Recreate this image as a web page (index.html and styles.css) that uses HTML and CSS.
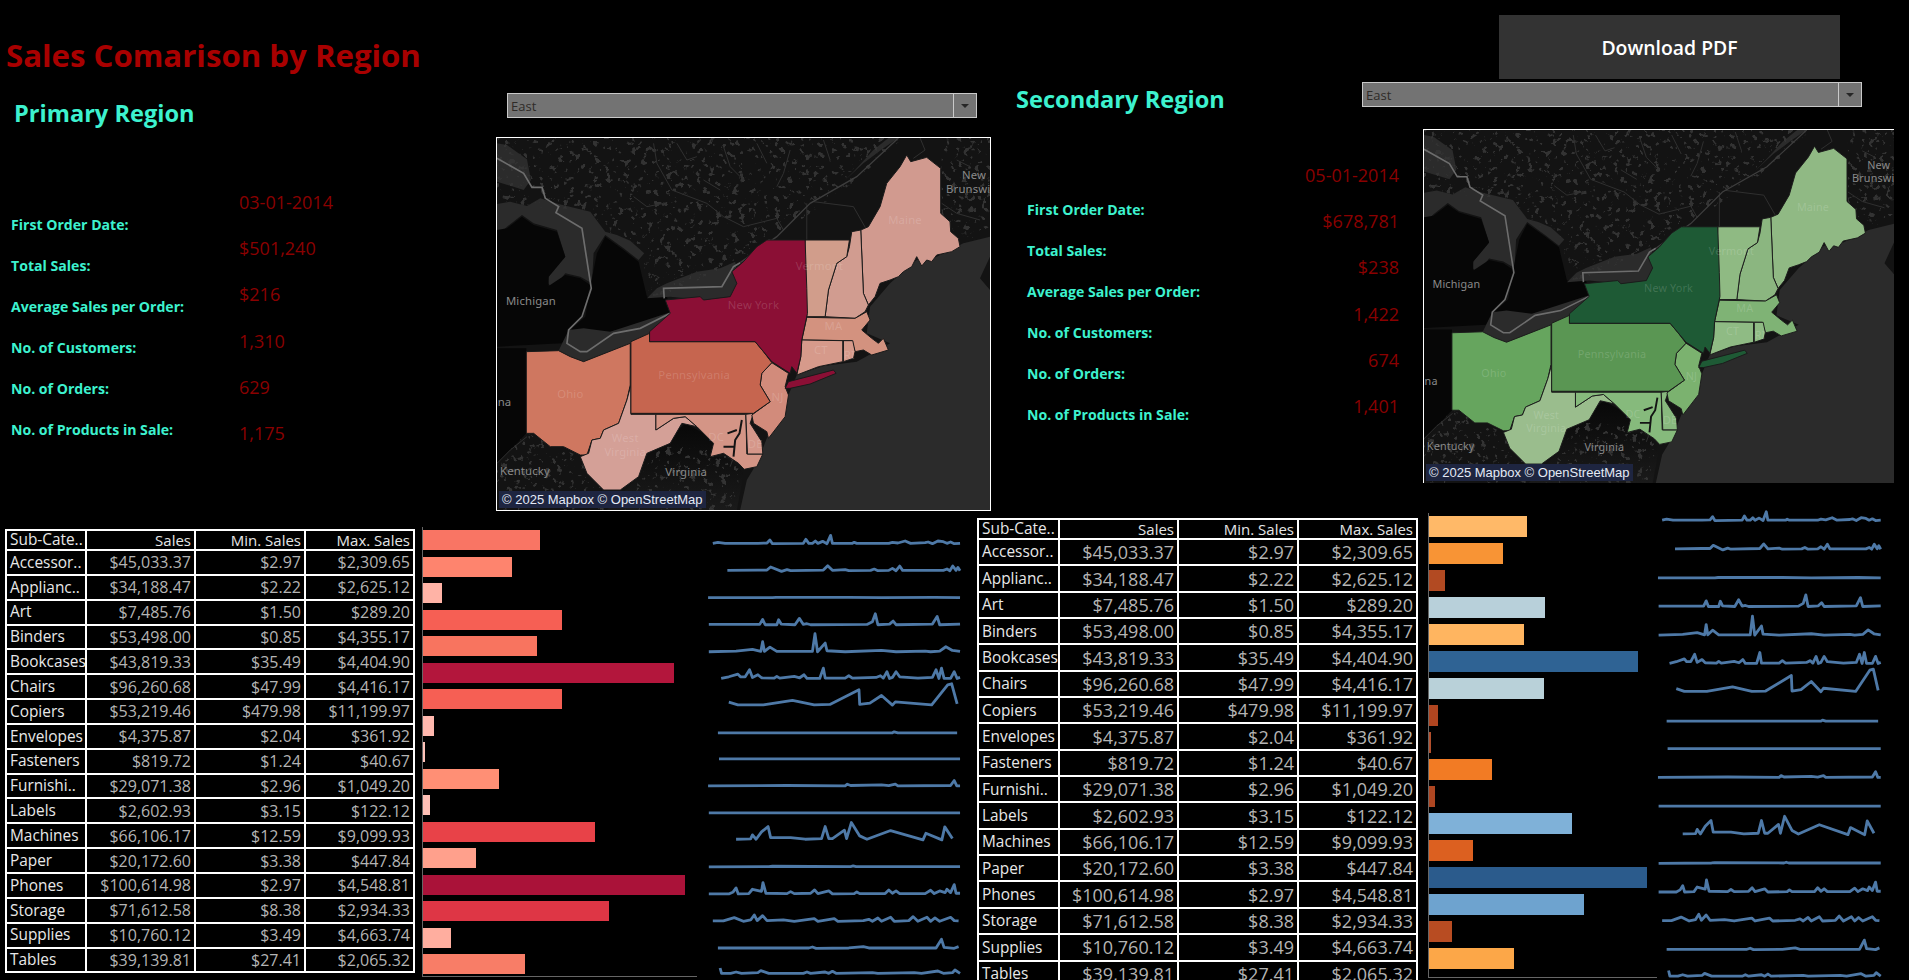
FILE: index.html
```html
<!DOCTYPE html>
<html lang="en">
<head>
<meta charset="utf-8">
<title>Sales Comparison by Region</title>
<link rel="stylesheet" href="styles.css">
</head>
<body>
<main class="dash">
  <section class="top">
    <div class="block block-a">
      <div class="head head-a">
        <div class="heading-a">
          <h1 class="title">Sales Comarison by Region</h1>
          <h2 class="region region-a">Primary Region</h2>
        </div>
        <div class="control-a">
          <div class="select select-a"><span class="select-text">East</span><span class="select-btn"><i class="caret"></i></span></div>
        </div>
      </div>
      <div class="body-row">
        <div class="stats stats-a">
          <div class="labels labels-a">
            <div>First Order Date:</div><div>Total Sales:</div><div>Average Sales per Order:</div><div>No. of Customers:</div><div>No. of Orders:</div><div>No. of Products in Sale:</div>
          </div>
          <div class="values values-a">
            <div>03-01-2014</div><div>$501,240</div><div>$216</div><div>1,310</div><div>629</div><div>1,175</div>
          </div>
        </div>
        <div class="map map-a">
          <svg class="map-svg" viewBox="20 174 1480 1116" preserveAspectRatio="none">
            <defs>
              <filter id="speck" x="0" y="0" width="100%" height="100%" color-interpolation-filters="sRGB">
                <feTurbulence type="fractalNoise" baseFrequency="0.055" numOctaves="3" seed="7"/>
                <feColorMatrix values="0 0 0 0 0.2 0 0 0 0 0.2 0 0 0 0 0.2 14 0 0 0 -8.6"/>
              </filter>
              <clipPath id="north"><path d="M20 174H1240L1100 300 860 470 740 545 540 640 470 650 460 530 340 450 300 390 130 380 20 360Z M1355 174H1500V480L1410 480 1355 400Z M20 1150 108 1060 270 1130 340 1235 340 1290H20Z M500 1100 750 1100 740 1290H400Z"/></clipPath>
              <linearGradient id="vaShade" x1="0" y1="0" x2="0" y2="1"><stop offset="0" stop-color="#080808"/><stop offset="1" stop-color="#1a1a1a"/></linearGradient>
            </defs>
            <g id="map-art">
              <rect class="land" x="20" y="174" width="1480" height="1116"/>
              <path class="water" d="M20 190 50 195 110 238 122 300 100 330 20 305Z"/>
              <path class="water" d="M1060 305 1120 250 1180 205 1225 174H1195L1150 210 1090 275Z"/>
              <path class="water" d="M20 372 60 365 110 378 150 355 205 372 300 395 345 455 380 465 420 482 462 520 445 540 400 505 345 465 310 520 305 610 270 590 225 580 190 625 172 610 175 590 225 530 200 450 130 430 95 405 50 440 20 470Z"/>
              <path class="black" d="M20 450 50 445 95 410 130 435 200 455 225 530 175 590 175 618 225 585 270 595 300 615 280 700 240 750 215 790 20 800Z"/>
              <path class="black" d="M300 620 320 520 345 470 400 510 445 545 470 650 530 650 545 700 440 735 360 755 280 800 240 790 245 745 285 710Z"/>
              <path class="water" d="M470 655 500 625 530 610 620 575 690 565 735 545 745 600 720 650 640 660 540 650Z"/>
              <path class="water" d="M205 812 235 750 280 745 360 755 545 695 480 760 420 790 280 845 240 830Z"/>
              <path class="black" d="M20 805H108V1060L70 1100 20 1150Z"/>
              <path class="water" d="M1500 470 1420 490 1340 530 1280 540 1200 610 1140 680 1130 760 1200 790 1100 845 1000 858 920 885 895 945 830 1075 800 1150 770 1200 750 1290H1500V630L1470 595 1500 530Z"/>
              <path d="M520 1090 585 1030 640 1060 670 1090 660 1130 700 1130 745 1160 760 1180 740 1290H350L445 1190 470 1125Z" fill="url(#vaShade)"/>
              <rect x="20" y="174" width="1480" height="1116" filter="url(#speck)" clip-path="url(#north)"/>
              <path class="river" d="M490 190 500 250 545 330 650 370 700 410 760 440 860 415 880 450M950 370 950 480M970 365 1090 380 1130 450M1355 370 1400 400 1470 420M20 1150 60 1110 110 1070M720 1160 745 1090 730 1030M1290 174 1305 210 1270 235M560 190 590 240 620 230M700 200 720 260 760 300M800 190 830 250M900 210 880 280 860 320M640 300 690 330M1000 180 1020 240M430 350 470 380 520 370M1400 240 1440 260"/>
              <path class="border" d="M20 235 100 280 125 322 155 322 165 355 205 380 197 398 275 445 303 625 275 710 235 750 230 790 270 815 290 815 370 760 450 745 540 700"/>
              <path class="border" d="M522 655 520 625 695 620 730 560 750 548"/>
              <path class="border thin" d="M750 548 860 470 960 370 1100 290 1225 174"/>
              <g class="states">
                <path class="st me" d="M1112 450 1135 440 1170 380 1190 310 1230 260 1250 225 1262 245 1310 232 1352 265 1352 400 1380 425 1382 455 1405 475 1410 500 1385 515 1340 525 1325 545 1310 540 1295 558 1280 530 1265 560 1240 575 1225 590 1200 600 1170 610 1155 650 1135 675 1120 640Z"/>
                <path class="st nh" d="M1085 455 1112 450 1120 640 1135 675 1125 695 1095 715 1005 710 1015 630 1040 550 1070 530 1078 500Z"/>
                <path class="st vt" d="M945 480H1078L1070 530 1040 550 1015 630 1005 710 950 710 945 625 940 620Z"/>
                <path class="st ma" d="M950 712 1095 715 1130 695 1140 720 1115 750 1145 775 1165 790 1180 775 1195 810 1145 825 1120 810 1095 815 1085 782 935 780Z"/>
                <path class="st ct" d="M935 780 1058 782V845L985 860 920 885 932 830Z"/>
                <path class="st ct" d="M1060 782H1088L1095 815 1090 835 1060 845Z"/>
                <path class="st oh" d="M108 815 205 812 240 830 280 845 420 790V915L410 960 385 1030 340 1050 330 1075 305 1080 290 1125 270 1125 220 1100 180 1100 130 1060 108 1060Z"/>
                <path class="st wv" d="M422 915V1003H497V1050L550 1015 585 1010 620 1040 575 1030 540 1090 470 1120 445 1190 390 1230 340 1230 290 1180 270 1130 295 1120 305 1080 330 1075 340 1050 385 1030 410 960Z"/>
                <path class="st md" d="M497 1003H767L770 1122H818L800 1160 762 1168 745 1150 700 1120 660 1130 670 1090 620 1040 585 1010 550 1015 497 1050Z"/>
                <path class="st de" d="M767 1003 790 1000 780 1030 815 1085 818 1122H772Z"/>
                <path class="st nj" d="M845 848 895 880 885 920 895 945 885 1010 835 1075 830 1055 790 1030 785 1005 840 965 810 915 815 880Z"/>
                <path class="st pa" d="M422 785 478 760V785H795L820 815 845 848 815 880 810 915 840 965 790 1000H422Z"/>
                <path class="st ny" d="M830 480H945L950 625 952 700 935 780 932 830 920 880 905 860 900 880 845 845 820 815 795 785H478V755L540 700 525 660 630 650 640 660 720 650 740 610 725 575 760 545 800 500Z"/>
                <path class="st ny" d="M885 925 895 905 1030 870 1038 880 960 912 900 925Z"/>
                <path class="chesapeake" d="M755 1020 748 1060 735 1080 730 1130M740 1050 712 1060M735 1100 700 1100"/>
              </g>
            </g>
            <g class="map-labels">
              <text class="lb-dark" x="122" y="675">Michigan</text>
              <text class="lb-dark" x="104" y="1186">Kentucky</text>
              <text class="lb-dark" x="588" y="1188">Virginia</text>
              <text class="lb-dark" x="1452" y="298">New</text>
              <text class="lb-dark lb-start" x="1368" y="338">Brunswick</text>
              <text class="lb-dark lb-end" x="63" y="979">Indiana</text>
              <text class="lb-state" x="790" y="686">New York</text>
              <text class="lb-state" x="988" y="569">Vermont</text>
              <text class="lb-state" x="1245" y="431">Maine</text>
              <text class="lb-state" x="1030" y="749">MA</text>
              <text class="lb-state" x="992" y="823">CT</text>
              <text class="lb-state" x="1078" y="836">RI</text>
              <text class="lb-state" x="612" y="896">Pennsylvania</text>
              <text class="lb-state" x="240" y="954">Ohio</text>
              <text class="lb-state" x="862" y="963">NJ</text>
              <text class="lb-state" x="405" y="1087">West</text>
              <text class="lb-state" x="405" y="1128">Virginia</text>
              <text class="lb-state" x="678" y="1083">DC</text>
              <text class="lb-state" x="795" y="1104">DE</text>
            </g>
          </svg>
          <div class="attrib">© 2025 Mapbox © OpenStreetMap</div>
        </div>
      </div>
    </div>

    <div class="block block-b">
      <div class="head head-b">
        <h2 class="region region-b">Secondary Region</h2>
        <div class="control-b">
          <button class="pdf" type="button">Download PDF</button>
          <div class="select select-b"><span class="select-text">East</span><span class="select-btn"><i class="caret"></i></span></div>
        </div>
      </div>
      <div class="body-row">
        <div class="stats stats-b">
          <div class="labels labels-b">
            <div>First Order Date:</div><div>Total Sales:</div><div>Average Sales per Order:</div><div>No. of Customers:</div><div>No. of Orders:</div><div>No. of Products in Sale:</div>
          </div>
          <div class="values values-b">
            <div>05-01-2014</div><div>$678,781</div><div>$238</div><div>1,422</div><div>674</div><div>1,401</div>
          </div>
        </div>
        <div class="map map-b">
          <svg class="map-svg" viewBox="20 174 1480 1116" preserveAspectRatio="none">
            <use href="#map-art"/>
            <g class="map-labels">
              <text class="lb-dark" x="122" y="675">Michigan</text>
              <text class="lb-dark" x="104" y="1186">Kentucky</text>
              <text class="lb-dark" x="588" y="1188">Virginia</text>
              <text class="lb-dark" x="1452" y="298">New</text>
              <text class="lb-dark lb-start" x="1368" y="338">Brunswick</text>
              <text class="lb-dark lb-end" x="63" y="979">Indiana</text>
              <text class="lb-state" x="790" y="686">New York</text>
              <text class="lb-state" x="988" y="569">Vermont</text>
              <text class="lb-state" x="1245" y="431">Maine</text>
              <text class="lb-state" x="1030" y="749">MA</text>
              <text class="lb-state" x="992" y="823">CT</text>
              <text class="lb-state" x="1078" y="836">RI</text>
              <text class="lb-state" x="612" y="896">Pennsylvania</text>
              <text class="lb-state" x="240" y="954">Ohio</text>
              <text class="lb-state" x="862" y="963">NJ</text>
              <text class="lb-state" x="405" y="1087">West</text>
              <text class="lb-state" x="405" y="1128">Virginia</text>
              <text class="lb-state" x="678" y="1083">DC</text>
              <text class="lb-state" x="795" y="1104">DE</text>
            </g>
          </svg>
          <div class="attrib">© 2025 Mapbox © OpenStreetMap</div>
        </div>
      </div>
    </div>
  </section>

  <section class="bottom">
    <div class="detail detail-a">
      <table class="sales sales-a">
        <colgroup><col class="c1"><col class="c2"><col class="c3"><col class="c4"></colgroup>
        <thead><tr><th class="name">Sub-Cate..</th><th>Sales</th><th>Min. Sales</th><th>Max. Sales</th></tr></thead>
        <tbody>
          <tr><th class="name">Accessor..</th><td>$45,033.37</td><td>$2.97</td><td>$2,309.65</td></tr>
          <tr><th class="name">Applianc..</th><td>$34,188.47</td><td>$2.22</td><td>$2,625.12</td></tr>
          <tr><th class="name">Art</th><td>$7,485.76</td><td>$1.50</td><td>$289.20</td></tr>
          <tr><th class="name">Binders</th><td>$53,498.00</td><td>$0.85</td><td>$4,355.17</td></tr>
          <tr><th class="name">Bookcases</th><td>$43,819.33</td><td>$35.49</td><td>$4,404.90</td></tr>
          <tr><th class="name">Chairs</th><td>$96,260.68</td><td>$47.99</td><td>$4,416.17</td></tr>
          <tr><th class="name">Copiers</th><td>$53,219.46</td><td>$479.98</td><td>$11,199.97</td></tr>
          <tr><th class="name">Envelopes</th><td>$4,375.87</td><td>$2.04</td><td>$361.92</td></tr>
          <tr><th class="name">Fasteners</th><td>$819.72</td><td>$1.24</td><td>$40.67</td></tr>
          <tr><th class="name">Furnishi..</th><td>$29,071.38</td><td>$2.96</td><td>$1,049.20</td></tr>
          <tr><th class="name">Labels</th><td>$2,602.93</td><td>$3.15</td><td>$122.12</td></tr>
          <tr><th class="name">Machines</th><td>$66,106.17</td><td>$12.59</td><td>$9,099.93</td></tr>
          <tr><th class="name">Paper</th><td>$20,172.60</td><td>$3.38</td><td>$447.84</td></tr>
          <tr><th class="name">Phones</th><td>$100,614.98</td><td>$2.97</td><td>$4,548.81</td></tr>
          <tr><th class="name">Storage</th><td>$71,612.58</td><td>$8.38</td><td>$2,934.33</td></tr>
          <tr><th class="name">Supplies</th><td>$10,760.12</td><td>$3.49</td><td>$4,663.74</td></tr>
          <tr><th class="name">Tables</th><td>$39,139.81</td><td>$27.41</td><td>$2,065.32</td></tr>
        </tbody>
      </table>
      <div class="bars bars-a">
        <div class="bar r1"></div><div class="bar r2"></div><div class="bar r3"></div><div class="bar r4"></div><div class="bar r5"></div><div class="bar r6"></div><div class="bar r7"></div><div class="bar r8"></div><div class="bar r9"></div><div class="bar r10"></div><div class="bar r11"></div><div class="bar r12"></div><div class="bar r13"></div><div class="bar r14"></div><div class="bar r15"></div><div class="bar r16"></div><div class="bar r17"></div>
      </div>
      <svg class="spark spark-a" viewBox="820 60 700 1340" preserveAspectRatio="none">
        <g id="spark-lines">
          <path d="M836 103 850 100 870 103 960 103 985 102 993 93 1000 104 1085 103 1092 91 1100 103 1110 103 1118 96 1125 103 1138 97 1150 104 1160 79 1165 103 1220 103 1225 100 1232 103 1320 103 1330 100 1345 102 1365 96 1380 103 1420 101 1428 99 1440 104 1455 96 1470 98 1480 103 1490 99 1500 104 1516 103"/>
          <path d="M876 184 960 183 985 183 995 174 1025 187 1040 182 1050 185 1140 183 1152 170 1165 184 1200 182 1210 185 1270 184 1280 180 1290 185 1320 184 1330 178 1340 185 1350 171 1358 184 1470 184 1480 180 1488 185 1496 171 1505 184 1510 175 1516 185"/>
          <path d="M823 266 1000 266 1010 265 1210 265 1300 266 1445 265 1516 266"/>
          <path d="M825 346 965 346 973 331 980 347 1012 347 1017 332 1024 345 1062 347 1074 328 1085 346 1095 344 1105 347 1260 346 1275 338 1283 314 1290 347 1322 345 1332 336 1340 347 1440 345 1453 322 1460 347 1516 345"/>
          <path d="M825 428 900 426 945 421 968 427 973 398 978 427 993 414 1012 427 1110 427 1117 374 1124 428 1145 402 1150 425 1200 428 1300 424 1340 428 1420 426 1435 428 1460 426 1477 413 1495 424 1516 427"/>
          <path d="M859 508 880 503 905 495 912 503 925 503 937 482 945 505 960 497 970 506 1005 507 1012 502 1020 507 1060 502 1075 506 1087 497 1095 508 1130 508 1140 477 1145 507 1200 507 1210 500 1220 507 1285 505 1297 500 1305 507 1315 488 1322 508 1330 505 1340 488 1350 503 1400 507 1440 505 1450 482 1458 508 1465 477 1472 508 1490 508 1500 488 1508 508 1516 505"/>
          <path d="M880 579 905 587 975 587 1055 574 1115 587 1158 586 1238 542 1240 586 1268 582 1300 559 1330 588 1338 578 1438 587 1482 527 1493 524 1508 584"/>
          <path d="M850 671 1330 671 1335 668 1345 671 1508 671"/>
          <path d="M853 749H1516"/>
          <path d="M823 830 1040 829 1200 830 1206 825 1215 829 1300 827 1320 829 1338 825 1345 830 1490 829 1500 814 1507 830 1516 830"/>
          <path d="M825 911H1516"/>
          <path d="M900 990 940 989 945 977 955 990 970 968 988 952 995 985 1050 985 1090 990 1135 988 1145 952 1155 988 1165 988 1198 963 1204 988 1217 940 1240 980 1260 990 1325 964 1414 992 1422 972 1466 992 1474 953 1495 988"/>
          <path d="M825 1073 990 1072 1000 1071 1215 1072 1222 1070 1230 1072 1516 1072"/>
          <path d="M825 1154 880 1154 892 1148 900 1136 906 1154 935 1153 945 1140 970 1146 974 1120 982 1152 1040 1153 1050 1147 1060 1153 1105 1152 1116 1142 1125 1153 1155 1145 1165 1154 1225 1153 1232 1148 1240 1153 1310 1153 1320 1142 1330 1152 1340 1145 1350 1153 1420 1153 1435 1143 1445 1153 1460 1145 1475 1150 1480 1140 1490 1150 1500 1126 1505 1152 1516 1152"/>
          <path d="M836 1235 865 1235 895 1225 920 1236 940 1232 950 1217 958 1234 973 1219 985 1234 1030 1232 1060 1236 1115 1228 1125 1236 1170 1228 1180 1236 1250 1234 1265 1230 1275 1236 1290 1226 1300 1236 1325 1224 1335 1236 1375 1234 1387 1222 1400 1236 1425 1224 1435 1236 1447 1226 1460 1236 1490 1224 1500 1234 1512 1235"/>
          <path d="M850 1316 1100 1316 1110 1313 1120 1317 1210 1316 1250 1312 1265 1316 1450 1316 1465 1290 1472 1314 1500 1317 1512 1312"/>
          <path d="M856 1376 860 1392 885 1392 900 1388 915 1392 960 1390 968 1384 990 1392 1085 1392 1095 1388 1105 1392 1145 1388 1155 1392 1165 1386 1175 1392 1275 1390 1290 1392 1390 1390 1410 1392 1455 1385 1470 1392 1495 1390 1502 1382 1516 1392"/>
        </g>
      </svg>
    </div>

    <div class="detail detail-b">
      <table class="sales sales-b">
        <colgroup><col class="c1"><col class="c2"><col class="c3"><col class="c4"></colgroup>
        <thead><tr><th class="name">Sub-Cate..</th><th>Sales</th><th>Min. Sales</th><th>Max. Sales</th></tr></thead>
        <tbody>
          <tr><th class="name">Accessor..</th><td>$45,033.37</td><td>$2.97</td><td>$2,309.65</td></tr>
          <tr><th class="name">Applianc..</th><td>$34,188.47</td><td>$2.22</td><td>$2,625.12</td></tr>
          <tr><th class="name">Art</th><td>$7,485.76</td><td>$1.50</td><td>$289.20</td></tr>
          <tr><th class="name">Binders</th><td>$53,498.00</td><td>$0.85</td><td>$4,355.17</td></tr>
          <tr><th class="name">Bookcases</th><td>$43,819.33</td><td>$35.49</td><td>$4,404.90</td></tr>
          <tr><th class="name">Chairs</th><td>$96,260.68</td><td>$47.99</td><td>$4,416.17</td></tr>
          <tr><th class="name">Copiers</th><td>$53,219.46</td><td>$479.98</td><td>$11,199.97</td></tr>
          <tr><th class="name">Envelopes</th><td>$4,375.87</td><td>$2.04</td><td>$361.92</td></tr>
          <tr><th class="name">Fasteners</th><td>$819.72</td><td>$1.24</td><td>$40.67</td></tr>
          <tr><th class="name">Furnishi..</th><td>$29,071.38</td><td>$2.96</td><td>$1,049.20</td></tr>
          <tr><th class="name">Labels</th><td>$2,602.93</td><td>$3.15</td><td>$122.12</td></tr>
          <tr><th class="name">Machines</th><td>$66,106.17</td><td>$12.59</td><td>$9,099.93</td></tr>
          <tr><th class="name">Paper</th><td>$20,172.60</td><td>$3.38</td><td>$447.84</td></tr>
          <tr><th class="name">Phones</th><td>$100,614.98</td><td>$2.97</td><td>$4,548.81</td></tr>
          <tr><th class="name">Storage</th><td>$71,612.58</td><td>$8.38</td><td>$2,934.33</td></tr>
          <tr><th class="name">Supplies</th><td>$10,760.12</td><td>$3.49</td><td>$4,663.74</td></tr>
          <tr><th class="name">Tables</th><td>$39,139.81</td><td>$27.41</td><td>$2,065.32</td></tr>
        </tbody>
      </table>
      <div class="bars bars-b">
        <div class="bar r1"></div><div class="bar r2"></div><div class="bar r3"></div><div class="bar r4"></div><div class="bar r5"></div><div class="bar r6"></div><div class="bar r7"></div><div class="bar r8"></div><div class="bar r9"></div><div class="bar r10"></div><div class="bar r11"></div><div class="bar r12"></div><div class="bar r13"></div><div class="bar r14"></div><div class="bar r15"></div><div class="bar r16"></div><div class="bar r17"></div>
      </div>
      <svg class="spark spark-b" viewBox="820 60 700 1340" preserveAspectRatio="none">
        <use href="#spark-lines"/>
      </svg>
    </div>
  </section>
</main>
</body>
</html>
```

FILE: styles.css
```css
* { box-sizing: border-box; }
html, body { margin: 0; padding: 0; background: #000; }
body { font-family: "Open Sans", "Noto Sans", sans-serif; overflow: hidden; }
.dash { width: 1909px; height: 980px; overflow: hidden; background: #000; }

.top { display: flex; height: 510px; }
.block-a { width: 991px; flex: none; }
.block-b { width: 918px; flex: none; }

.head { display: flex; }
.head-a { height: 137px; }
.head-b { height: 129px; }
.heading-a { width: 496px; padding: 33px 0 0 6px; flex: none; }
.title { margin: 0; font-size: 31.2px; line-height: 44px; font-weight: 700; color: #a80000; white-space: nowrap; }
.region { margin: 0; font-size: 23.6px; line-height: 32px; font-weight: 700; color: #3df2cf; white-space: nowrap; }
.region-a { margin: 20px 0 0 8px; }
.region-b { width: 371px; flex: none; padding: 83px 0 0 25px; }

.control-a { padding: 93px 0 0 11px; }
.control-b { flex: none; width: 547px; }

.select { display: flex; height: 25px; background: #737373; border: 1px solid #c9c9c9; }
.select-a { width: 470px; }
.select-b { width: 500px; margin-top: 3px; }
.select-text { flex: 1; font-size: 13px; line-height: 25px; padding-left: 3px; color: #2f2b28; }
.select-btn { width: 23px; border-left: 1px solid #c9c9c9; display: flex; align-items: center; justify-content: center; }
.caret { width: 0; height: 0; border-left: 4px solid transparent; border-right: 4px solid transparent; border-top: 4px solid #262626; }

.pdf { display: block; width: 341px; height: 64px; margin: 15px 0 0 137px; border: 0; background: #333; color: #fff; font: 600 19.4px "Open Sans", sans-serif; }

.body-row { display: flex; }
.stats { display: flex; flex: none; }
.stats-a { width: 496px; padding-left: 11px; }
.stats-b { width: 432px; padding-left: 36px; }
.labels { flex: none; width: 228px; font-size: 14.1px; font-weight: 700; color: #3df2cf; white-space: nowrap; }
.labels > div { height: 41px; line-height: 41px; }
.labels-a { padding-top: 67px; }
.labels-b { padding-top: 60px; }
.values { font-size: 18px; color: #8a0000; white-space: nowrap; }
.values > div { height: 46.2px; line-height: 46px; }
.values-a { padding-top: 42px; }
.values-b { flex: 1; padding: 23px 24px 0 0; text-align: right; }

.map { position: relative; overflow: hidden; background: #000; }
.map-a { width: 495px; height: 374px; border: 1px solid #fff; }
.map-b { width: 471px; height: 354px; border-top: 1px solid #fff; border-left: 1px solid #fff; }
.map-svg { display: block; width: 100%; height: 100%; }
.attrib { position: absolute; left: 2px; bottom: 2px; background: #1e2540; color: #e4eaf6; font: 13px/17px "Liberation Sans", Arial, sans-serif; padding: 0 3px; white-space: nowrap; }

.land { fill: #131313; }
.water { fill: #2b2b2b; }
.black { fill: #060606; }
.river { fill: none; stroke: #303030; stroke-width: 3; }
.border { fill: none; stroke: #6d6d6d; stroke-width: 5; }
.border.thin { stroke: #3e3e3e; stroke-width: 4; }
.st { fill: var(--c); stroke: #1a1a1a; stroke-width: 3; stroke-linejoin: round; }
.chesapeake { fill: none; stroke: #141414; stroke-width: 6; }

.map-a { --me: #d19a8f; --nh: #d19c90; --vt: #d19d8b; --ma: #d3927f; --ct: #d69a8b; --oh: #cf7760; --wv: #d4a097; --md: #d49586; --de: #d5978a; --nj: #d28b7b; --pa: #c6654f; --ny: #8b0f35; }
.map-b { --me: #90b984; --nh: #8bb680; --vt: #8fba83; --ma: #7fb375; --ct: #8fbb84; --oh: #66a55e; --wv: #9abd8d; --md: #86ba7c; --de: #88b97e; --nj: #7bb26f; --pa: #5a9653; --ny: #1e5a35; }
.me { --c: var(--me); } .nh { --c: var(--nh); } .vt { --c: var(--vt); } .ma { --c: var(--ma); } .ct { --c: var(--ct); } .oh { --c: var(--oh); } .wv { --c: var(--wv); } .md { --c: var(--md); } .de { --c: var(--de); } .nj { --c: var(--nj); } .pa { --c: var(--pa); } .ny { --c: var(--ny); }

.map-labels text { font-family: "Noto Sans", sans-serif; font-size: 34px; text-anchor: middle; letter-spacing: 0.5px; }
.lb-dark { fill: #8a8a8a; }
.lb-state { fill: rgba(255, 255, 255, 0.16); }
.map-labels .lb-start { text-anchor: start; }
.map-labels .lb-end { text-anchor: end; }

.bottom { display: flex; height: 470px; overflow: hidden; }
.detail { display: flex; flex: none; align-items: flex-start; }
.detail-a { width: 977px; padding: 19px 0 0 5px; }
.detail-b { width: 932px; padding-top: 8px; }

.sales { table-layout: fixed; border-collapse: collapse; border: 2px solid #fff; flex: none; color: #b4b4b4; }
.sales th, .sales td { border: 2px solid #fff; padding: 0 3px 0 0; text-align: right; font-weight: 400; white-space: nowrap; overflow: hidden; line-height: 1; }
.sales thead th { color: #e6e6e6; font-size: 15px; }
.sales .name { text-align: left; padding: 0 0 0 3px; color: #e8e8e8; font-size: 15.4px; overflow: visible; }
.sales-a { width: 408px; }
.sales-a .c1 { width: 80px; } .sales-a .c2 { width: 109px; } .sales-a .c3 { width: 110px; } .sales-a .c4 { width: 109px; }
.sales-a tbody tr { height: 24.85px; }
.sales-a thead tr { height: 20px; }
.sales-a td { font-size: 16px; }
.sales-b { width: 439px; }
.sales-b .c1 { width: 81px; } .sales-b .c2 { width: 119px; } .sales-b .c3 { width: 120px; } .sales-b .c4 { width: 119px; }
.sales-b tbody tr { height: 26.35px; }
.sales-b thead tr { height: 20px; }
.sales-b td { font-size: 18px; }

.bars { flex: none; display: flex; flex-direction: column; align-items: flex-start; border-left: 1px solid #666; border-bottom: 1px solid #666; }
.bar { flex: none; height: var(--h); width: var(--w); background: var(--b); margin-bottom: var(--g); }
.bars-a { width: 275px; height: 450px; margin: -2px 0 0 7px; padding-top: 3px; --h: 20px; --g: 6.5px; }
.bars-b { width: 229px; height: 465px; margin: -5px 0 0 10px; padding-top: 3px; --h: 21px; --g: 6px; }

.bars-a .r1 { --w: 117px; --b: #f97564; } .bars-a .r2 { --w: 89px; --b: #fe846e; } .bars-a .r3 { --w: 19px; --b: #ffb3a6; } .bars-a .r4 { --w: 139px; --b: #f65f54; } .bars-a .r5 { --w: 114px; --b: #f8745f; } .bars-a .r6 { --w: 251px; --b: #b3163c; } .bars-a .r7 { --w: 139px; --b: #f65f54; } .bars-a .r8 { --w: 11px; --b: #ffb8ae; } .bars-a .r9 { --w: 2px; --b: #ffc2b8; } .bars-a .r10 { --w: 76px; --b: #ff8f75; } .bars-a .r11 { --w: 7px; --b: #ffbfb5; } .bars-a .r12 { --w: 172px; --b: #e84248; } .bars-a .r13 { --w: 53px; --b: #ffa08c; } .bars-a .r14 { --w: 262px; --b: #aa1239; } .bars-a .r15 { --w: 186px; --b: #de3645; } .bars-a .r16 { --w: 28px; --b: #ffae9f; } .bars-a .r17 { --w: 102px; --b: #f87d67; }
.bars-b .r1 { --w: 98px; --b: #ffb968; } .bars-b .r2 { --w: 74px; --b: #f89435; } .bars-b .r3 { --w: 16px; --b: #b24a22; } .bars-b .r4 { --w: 116px; --b: #b8d0da; } .bars-b .r5 { --w: 95px; --b: #ffb560; } .bars-b .r6 { --w: 209px; --b: #2f6394; } .bars-b .r7 { --w: 115px; --b: #b9d1d9; } .bars-b .r8 { --w: 9px; --b: #b04520; } .bars-b .r9 { --w: 2px; --b: #b34f2c; } .bars-b .r10 { --w: 63px; --b: #f27b24; } .bars-b .r11 { --w: 6px; --b: #ae4621; } .bars-b .r12 { --w: 143px; --b: #7fb1d8; } .bars-b .r13 { --w: 44px; --b: #dc6020; } .bars-b .r14 { --w: 218px; --b: #2b5b8c; } .bars-b .r15 { --w: 155px; --b: #6ea3cf; } .bars-b .r16 { --w: 23px; --b: #b84c22; } .bars-b .r17 { --w: 85px; --b: #fca748; }

.spark { flex: none; display: block; }
.spark path { fill: none; stroke: #4e79a7; stroke-width: 2.8px; stroke-linejoin: round; vector-effect: non-scaling-stroke; }
.spark-a { width: 254.5px; height: 447px; margin: 0 0 0 10px; }
.spark-b { width: 225px; height: 474px; margin: -13px 0 0 0; }
```
